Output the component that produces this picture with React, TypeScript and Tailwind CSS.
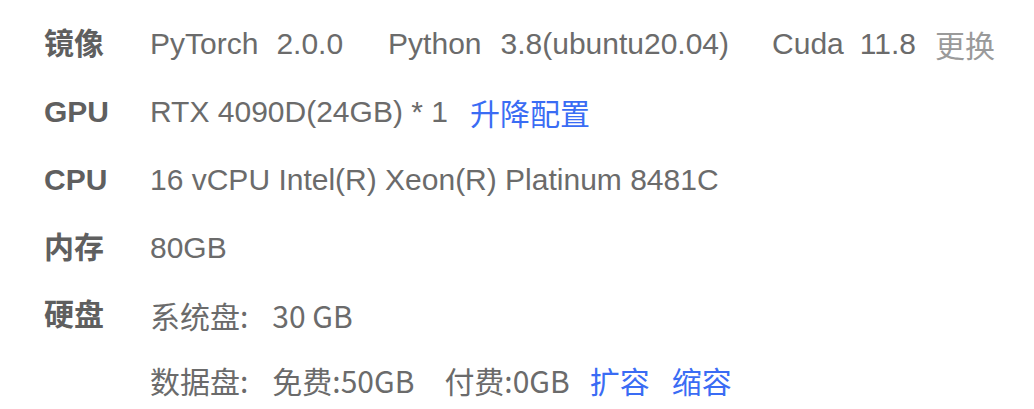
import React from "react";

const latin = "font-['Liberation_Sans','Noto_Sans_CJK_SC',sans-serif]";
const cjk = "font-['Noto_Sans_CJK_SC',sans-serif]";

function Row({ label, children, h = "h-[68px]" }: { label: string; children?: React.ReactNode; h?: string }) {
  return (
    <div className={`flex items-center ${h}`}>
      <div className={`w-[106px] pl-[44px] font-bold text-[#5f5f5f] ${latin}`}>{label}</div>
      <div className="ml-[44px] flex items-center whitespace-pre text-[#6b6b6b]">{children}</div>
    </div>
  );
}

export default function App() {
  return (
    <div className={`min-h-[409px] w-[1034px] bg-white pt-[10px] text-[30px] leading-none ${latin}`}>
      <Row label="镜像">
        <span>PyTorch</span>
        <span className="ml-[18px]">2.0.0</span>
        <span className="ml-[45px]">Python</span>
        <span className="ml-[19px]">3.8(ubuntu20.04)</span>
        <span className="ml-[43px]">Cuda</span>
        <span className="ml-[16px]">11.8</span>
        <span className={`ml-[19px] text-[#9a9a9a] ${cjk}`}>更换</span>
      </Row>
      <Row label="GPU">
        <span>RTX 4090D(24GB) * 1</span>
        <span className={`ml-[22px] text-[#3a6cf4] ${cjk}`}>升降配置</span>
      </Row>
      <Row label="CPU">
        <span>16 vCPU Intel(R) Xeon(R) Platinum 8481C</span>
      </Row>
      <Row label="内存">
        <span>80GB</span>
      </Row>
      <Row label="硬盘" h="h-[66px]">
        <span className={cjk}>系统盘:</span>
        <span className={`ml-[24px] ${cjk}`}>30 GB</span>
      </Row>
      <Row label="" h="h-[64px]">
        <span className={cjk}>数据盘:</span>
        <span className={`ml-[24px] ${cjk}`}>免费:50GB</span>
        <span className={`ml-[30px] ${cjk}`}>付费:0GB</span>
        <span className={`ml-[20px] text-[#3a6cf4] ${cjk}`}>扩容</span>
        <span className={`ml-[22px] text-[#3a6cf4] ${cjk}`}>缩容</span>
      </Row>
    </div>
  );
}
